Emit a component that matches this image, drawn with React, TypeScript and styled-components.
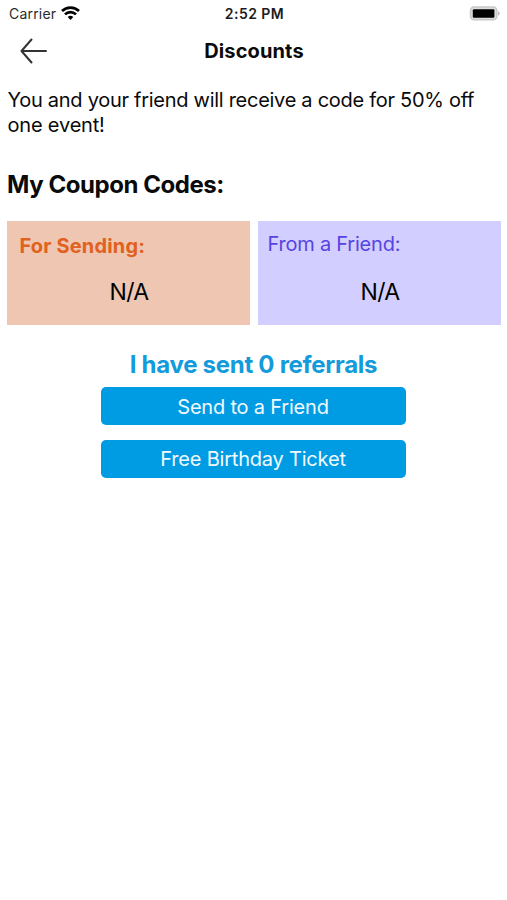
import React from "react";
import styled, { createGlobalStyle } from "styled-components";

const Global = createGlobalStyle`
  * { box-sizing: border-box; }
  body { margin: 0; background: #fff; }
`;

const Screen = styled.div`
  width: 507px;
  height: 900px;
  overflow: hidden;
  background: #fff;
  color: #0a0a0a;
  font-family: Inter, "Liberation Sans", sans-serif;
`;

const StatusBar = styled.div`
  display: grid;
  grid-template-columns: 1fr auto 1fr;
  align-items: center;
  height: 27px;
  padding: 0 7px 0 9px;
`;

const Carrier = styled.div`
  display: flex;
  align-items: center;
  gap: 5px;
`;

const WifiIcon = styled.svg`
  margin-top: -2px;
`;

const Battery = styled.div`
  display: flex;
  justify-content: flex-end;
  margin-top: -1px;
`;

const Header = styled.header`
  display: grid;
  grid-template-columns: 60px 1fr 60px;
  align-items: center;
  height: 47px;
`;

const BackButton = styled.button`
  display: flex;
  padding: 0 0 0 19px;
  border: 0;
  background: none;
  color: #333;
`;

const Text = styled.span<{ $size: number; $weight?: number; $track?: number; $color?: string }>`
  display: block;
  font-size: ${(p) => p.$size}px;
  font-weight: ${(p) => p.$weight ?? 400};
  letter-spacing: ${(p) => p.$track ?? 0}px;
  color: ${(p) => p.$color ?? "inherit"};
  white-space: nowrap;
`;

const PageTitle = styled.div`
  display: flex;
  justify-content: center;
  padding-left: 1px;
`;

const Main = styled.main`
  padding: 14px 7px 0;
`;

const Intro = styled.div`
  padding-left: 0.5px;
  line-height: 24.5px;
`;

const Title = styled.div`
  margin-top: 33px;
  line-height: 30px;
`;

const Cards = styled.div`
  display: grid;
  grid-template-columns: 243px 243px;
  gap: 8px;
  margin-top: 21px;
`;

const Card = styled.section<{ $bg: string; $top: number; $left: number }>`
  height: 104px;
  padding: ${(p) => p.$top}px 0 0 ${(p) => p.$left}px;
  background: ${(p) => p.$bg};
  line-height: 28px;
`;

const CardValue = styled.div<{ $top: number; $left: number }>`
  display: flex;
  justify-content: center;
  margin-top: ${(p) => p.$top}px;
  margin-left: -${(p) => p.$left}px;
  padding-left: 1px;
  color: #000;
`;

const Actions = styled.div`
  display: flex;
  flex-direction: column;
  align-items: center;
  margin-top: 25px;
  line-height: 30px;
`;

const ActionButton = styled.button<{ $top: number }>`
  display: flex;
  align-items: center;
  justify-content: center;
  width: 305px;
  height: 38px;
  margin-top: ${(p) => p.$top}px;
  padding: 1px 1px 0 0;
  border: 0;
  border-radius: 5px;
  background: #009ce3;
  color: #f2faff;
  font-family: inherit;
`;

export default function App() {
  return (
    <Screen>
      <Global />
      <StatusBar>
        <Carrier>
          <Text $size={14} $track={0.2} $color="#2b2b2b">Carrier</Text>
          <WifiIcon width="19" height="14" viewBox="0 0 19 14" fill="none" stroke="#000" strokeWidth="2.7">
            <path d="M1 5a12.2 12.2 0 0 1 17 0M4 8.4a7.8 7.8 0 0 1 11 0" />
            <path d="M6.7 11.1a4 4 0 0 1 5.6 0L9.5 14z" fill="#000" stroke="none" />
          </WifiIcon>
        </Carrier>
        <Text $size={14} $weight={600} $track={0.45} $color="#1c1c1c">2:52 PM</Text>
        <Battery>
          <svg width="31" height="15" viewBox="0 0 31 15">
            <rect x="1.5" y="1.1" width="26.3" height="12.6" rx="3.5" fill="#ddd" stroke="#c8c8c8" strokeWidth="1.5" />
            <rect x="3.8" y="3.2" width="21.6" height="8.6" rx="1" />
            <path d="M29.2 5q2.8 2.4 0 4.8z" fill="#aaa" />
          </svg>
        </Battery>
      </StatusBar>
      <Header>
        <BackButton aria-label="Back">
          <svg width="29" height="26" viewBox="0 0 29 26" fill="none" stroke="currentColor" strokeWidth="2" strokeLinecap="round" strokeLinejoin="round">
            <path d="M12.5 1.5 2.5 13l10 11.5M2.5 13H27" />
          </svg>
        </BackButton>
        <PageTitle><Text $size={20} $weight={700} $track={0.12}>Discounts</Text></PageTitle>
      </Header>
      <Main>
        <Intro>
          <Text $size={20} $track={-0.28}>You and your friend will receive a code for 50% off</Text>
          <Text $size={20} $track={-0.18}>one event!</Text>
        </Intro>
        <Title><Text $size={24} $weight={700} $track={-0.45}>My Coupon Codes:</Text></Title>
        <Cards>
          <Card $bg="#efc6b1" $top={11} $left={12.5}>
            <Text $size={20} $weight={700} $track={0.17} $color="#e06120">For Sending:</Text>
            <CardValue $top={18} $left={12.5}><Text $size={23} $track={-0.7}>N/A</Text></CardValue>
          </Card>
          <Card $bg="#d2ceff" $top={9} $left={9.5}>
            <Text $size={20} $track={-0.22} $color="#5644e2">From a Friend:</Text>
            <CardValue $top={20} $left={9.5}><Text $size={23} $track={-0.7}>N/A</Text></CardValue>
          </Card>
        </Cards>
        <Actions>
          <Text $size={24} $weight={700} $track={-0.28} $color="#139bdb">I have sent 0 referrals</Text>
          <ActionButton $top={7}><Text $size={20} $track={-0.2}>Send to a Friend</Text></ActionButton>
          <ActionButton $top={14.5}><Text $size={20} $track={-0.2}>Free Birthday Ticket</Text></ActionButton>
        </Actions>
      </Main>
    </Screen>
  );
}
